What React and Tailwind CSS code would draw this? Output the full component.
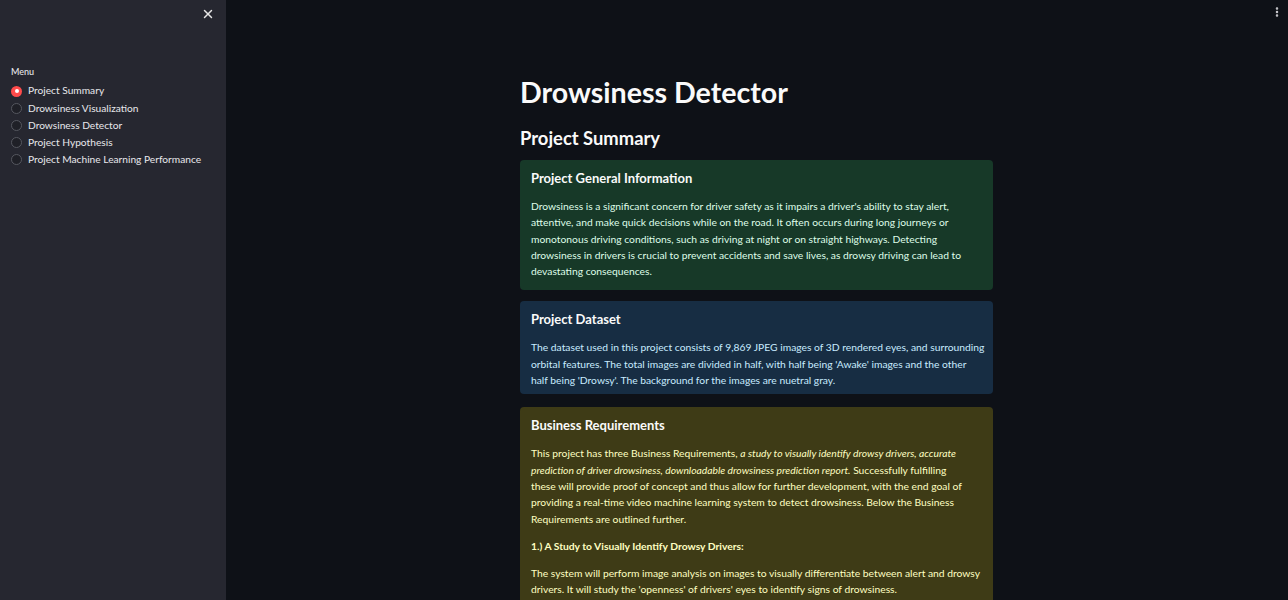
import { X, EllipsisVertical } from "lucide-react";

const MENU = [
  "Project Summary",
  "Drowsiness Visualization",
  "Drowsiness Detector",
  "Project Hypothesis",
  "Project Machine Learning Performance",
];

const GENERAL = [
  "Drowsiness is a significant concern for driver safety as it impairs a driver's ability to stay alert,",
  "attentive, and make quick decisions while on the road. It often occurs during long journeys or",
  "monotonous driving conditions, such as driving at night or on straight highways. Detecting",
  "drowsiness in drivers is crucial to prevent accidents and save lives, as drowsy driving can lead to",
  "devastating consequences.",
];

const DATASET = [
  "The dataset used in this project consists of 9,869 JPEG images of 3D rendered eyes, and surrounding",
  "orbital features. The total images are divided in half, with half being 'Awake' images and the other",
  "half being 'Drowsy'. The background for the images are nuetral gray.",
];

const STUDY = [
  "The system will perform image analysis on images to visually differentiate between alert and drowsy",
  "drivers. It will study the 'openness' of drivers' eyes to identify signs of drowsiness.",
];

function Radio({ checked }) {
  if (checked) {
    return (
      <span className="flex h-[11px] w-[11px] items-center justify-center rounded-full bg-[#ff4b4b]">
        <span className="h-[4px] w-[4px] rounded-full bg-white" />
      </span>
    );
  }
  return <span className="h-[11px] w-[11px] rounded-full border border-[#55575f] bg-[#1f2027]" />;
}

function Sidebar() {
  return (
    <aside className="flex w-[226px] shrink-0 flex-col bg-[#262730] px-[11px]">
      <div className="flex justify-end pt-[7px]">
        <X className="h-[14px] w-[14px] text-[#e6e6e6]" strokeWidth={2.5} />
      </div>
      <p className="mt-[44px] text-[9px] font-medium text-[#e6e6ea]">Menu</p>
      <ul className="mt-[4px] flex flex-col">
        {MENU.map((item, i) => (
          <li key={item} className="flex h-[17.2px] items-center gap-[6px]">
            <Radio checked={i === 0} />
            <span className="text-[10.2px] text-[#e8e8ec]">{item}</span>
          </li>
        ))}
      </ul>
    </aside>
  );
}

function Lines({ lines }) {
  return (
    <div>
      {lines.map((line) => (
        <p key={line} className="whitespace-nowrap">
          {line}
        </p>
      ))}
    </div>
  );
}

function Box({ tone, title, children, className = "pb-[12px]" }) {
  const tones = {
    green: "bg-[#173928] text-[#dffde9]",
    blue: "bg-[#172d43] text-[#c7ebff]",
    yellow: "bg-[#3e3b16] text-[#ffffc2]",
  };
  return (
    <div className={`rounded-[4px] px-[11px] pt-[9px] ${className} ${tones[tone]}`}>
      <h3 className="text-[13px] font-bold leading-[18px] text-[#fafafa]">{title}</h3>
      <div className="mt-[11px] flex flex-col gap-[10.7px] text-[10.3px] leading-[16.3px]">{children}</div>
    </div>
  );
}

export default function App() {
  return (
    <div className="flex h-[600px] w-[1288px] overflow-hidden bg-[#0e1117] font-['Lato',sans-serif]">
      <Sidebar />
      <main className="relative flex-1">
        <EllipsisVertical className="absolute right-[5px] top-[6px] h-[12px] w-[12px] text-[#cfcfd4]" strokeWidth={3} />
        <div className="ml-[294px] w-[473px] pt-[74px]">
          <h1 className="text-[28.6px] font-bold leading-[36px] text-[#fafafa]">Drowsiness Detector</h1>
          <h2 className="mt-[16px] text-[18.4px] font-bold leading-[24px] text-[#fafafa]">Project Summary</h2>
          <div className="mt-[10px] flex flex-col gap-[11px]">
            <Box tone="green" title="Project General Information" className="pb-[11px]">
              <Lines lines={GENERAL} />
            </Box>
            <Box tone="blue" title="Project Dataset" className="pb-[6px]">
              <Lines lines={DATASET} />
            </Box>
            <div className="mt-[2px]">
              <Box tone="yellow" title="Business Requirements">
                <div className="whitespace-nowrap">
                  <p>
                    This project has three Business Requirements,{" "}
                    <em>a study to visually identify drowsy drivers, accurate</em>
                  </p>
                  <p>
                    <em>prediction of driver drowsiness, downloadable drowsiness prediction report.</em> Successfully
                    fulfilling
                  </p>
                  <p>these will provide proof of concept and thus allow for further development, with the end goal of</p>
                  <p>providing a real-time video machine learning system to detect drowsiness. Below the Business</p>
                  <p>Requirements are outlined further.</p>
                </div>
                <p className="font-bold">1.) A Study to Visually Identify Drowsy Drivers:</p>
                <Lines lines={STUDY} />
              </Box>
            </div>
          </div>
        </div>
      </main>
    </div>
  );
}
